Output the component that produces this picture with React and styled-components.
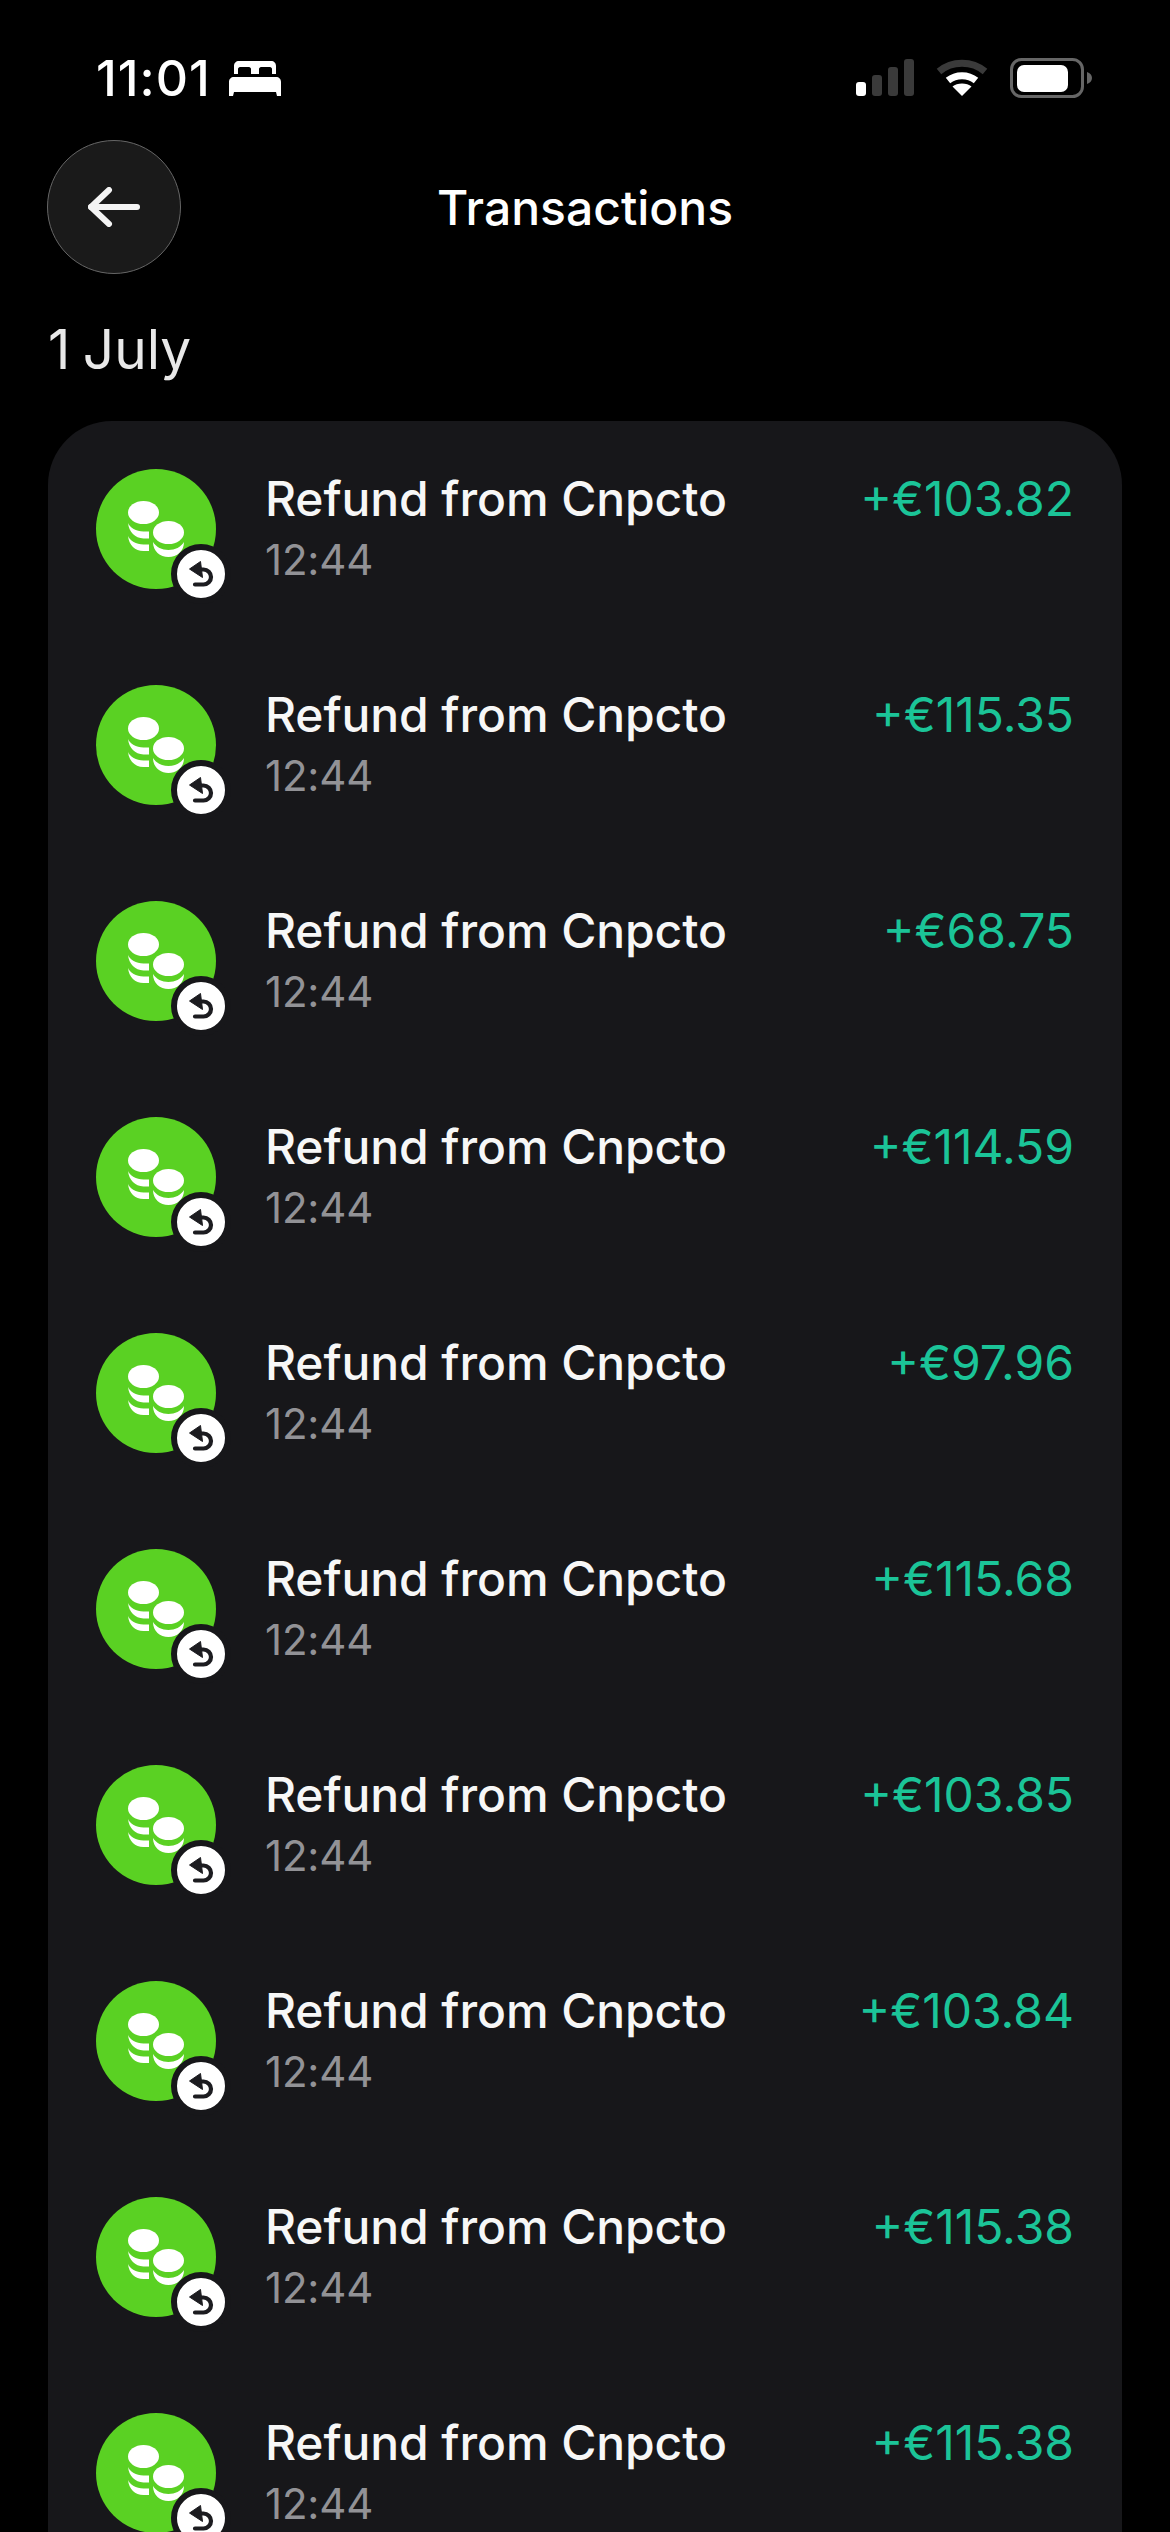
import styled, { createGlobalStyle } from 'styled-components';

const GlobalStyle = createGlobalStyle`
  html, body {
    margin: 0;
    padding: 0;
    background: #000;
  }
  * {
    box-sizing: border-box;
  }
`;

const Screen = styled.div`
  width: 1170px;
  height: 2532px;
  overflow: hidden;
  background: #000;
  color: #fff;
  font-family: Inter, "Noto Sans", sans-serif;
`;

const StatusBar = styled.div`
  height: 140px;
  padding: 0 78px 0 96px;
  display: flex;
  align-items: flex-start;
  justify-content: space-between;
`;

const StatusLeft = styled.div`
  display: flex;
  align-items: center;
  gap: 18px;
  height: 36px;
  margin-top: 60px;
`;

const Clock = styled.span`
  font-size: 50px;
  font-weight: 500;
  line-height: 36px;
  letter-spacing: 1px;
`;

const StatusRight = styled.div`
  display: flex;
  align-items: center;
  gap: 22px;
  margin-top: 58px;
`;

const NavBar = styled.div`
  position: relative;
  height: 134px;
  padding-left: 47px;
  display: flex;
  align-items: center;
`;

const BackButton = styled.div`
  width: 134px;
  height: 134px;
  border-radius: 50%;
  background: #1a1a1a;
  border: 1.5px solid #666;
  display: flex;
  align-items: center;
  justify-content: center;
`;

const NavTitle = styled.div`
  position: absolute;
  left: 0;
  right: 0;
  top: 0;
  bottom: 0;
  display: flex;
  align-items: center;
  justify-content: center;
  font-size: 48px;
  font-weight: 500;
`;

const DateLabel = styled.div`
  margin-top: 40px;
  padding-left: 48px;
  height: 70px;
  font-size: 55px;
  line-height: 70px;
  word-spacing: -3px;
  color: #e8e8e8;
`;

const Card = styled.div`
  margin: 37px 48px 0;
  padding: 48px 48px 0;
  background: #17171a;
  border-radius: 64px 64px 0 0;
  display: flex;
  flex-direction: column;
  gap: 96px;
`;

const Row = styled.div`
  display: flex;
  align-items: flex-start;
  height: 120px;
`;

const Avatar = styled.div`
  position: relative;
  flex: none;
  width: 120px;
  height: 120px;
  border-radius: 50%;
  background: #5ad123;
  display: flex;
  align-items: center;
  justify-content: center;
`;

const Badge = styled.div`
  position: absolute;
  left: 75px;
  top: 75px;
  width: 60px;
  height: 60px;
  border-radius: 50%;
  background: #fff;
  border: 6px solid #17171a;
  display: flex;
  align-items: center;
  justify-content: center;
`;

const Info = styled.div`
  flex: 1;
  margin-left: 49px;
  display: flex;
  flex-direction: column;
`;

const Title = styled.div`
  font-size: 48px;
  font-weight: 500;
  line-height: 60px;
  letter-spacing: -0.1px;
  color: #f7f7f7;
`;

const Time = styled.div`
  margin-top: 1px;
  font-size: 42px;
  line-height: 60px;
  letter-spacing: -0.2px;
  color: #929296;
`;

const Amount = styled.div`
  font-size: 48px;
  line-height: 60px;
  color: #1bc498;
`;

const amounts = [
  '+€103.82', '+€115.35', '+€68.75', '+€114.59', '+€97.96',
  '+€115.68', '+€103.85', '+€103.84', '+€115.38', '+€115.38',
];

const BedIcon = () => (
  <svg width="52" height="36" viewBox="0 0 52 36">
    <path fill="#fff" d="M5 14V6c0-3 2-5 5-5h32c3 0 5 2 5 5v8h-4V9c0-1-1-2-2-2h-9c-1 0-2 1-2 2v5h-8V9c0-1-1-2-2-2h-9c-1 0-2 1-2 2v5z" />
    <path fill="#fff" d="M5 17h42c3 0 5 2 5 5v14h-4l-1-4H5l-1 4H0V22c0-3 2-5 5-5z" />
  </svg>
);

const SignalIcon = () => (
  <svg width="58" height="38" viewBox="0 0 58 38">
    <rect x="0" y="23" width="10" height="14" rx="3" fill="#fff" />
    <rect x="16" y="16" width="10" height="21" rx="3" fill="#3a3a3a" />
    <rect x="32" y="8" width="10" height="29" rx="3" fill="#3a3a3a" />
    <rect x="48" y="0" width="10" height="37" rx="3" fill="#3a3a3a" />
  </svg>
);

const WifiIcon = () => (
  <svg width="52" height="38" viewBox="0 0 52 38">
    <path d="M3 12.500C16 1.500 36 1.500 49 12.500" fill="none" stroke="#3a3a3a" strokeWidth="7" />
    <path d="M12 21.500C20 15 32 15 40 21.500" fill="none" stroke="#fff" strokeWidth="7" />
    <path d="M26 37l-9.500-9.500C21 23.500 31 23.500 35.500 27.500z" fill="#fff" />
  </svg>
);

const BatteryIcon = () => (
  <svg width="82" height="40" viewBox="0 0 82 40">
    <rect x="1.500" y="1.500" width="71" height="37" rx="10" fill="none" stroke="#666" strokeWidth="3" />
    <rect x="7" y="7" width="51" height="27" rx="7" fill="#fff" />
    <path d="M77 14c3 1 5 3 5 6s-2 5-5 6z" fill="#666" />
  </svg>
);

const BackIcon = () => (
  <svg width="52" height="40" viewBox="0 0 52 40" fill="none" stroke="#f4f4f4" strokeWidth="6" strokeLinecap="round" strokeLinejoin="round">
    <path d="M3 20h46" />
    <path d="M21 3L3 20l18 17" />
  </svg>
);

const CoinsIcon = () => (
  <svg width="56" height="56" viewBox="0 0 56 56" fill="#fff">
    <ellipse cx="15.500" cy="11.500" rx="15.500" ry="11.500" />
    <path d="M0 22c2 5 8 8 15.500 8.500H21v7h-5.500C7 37 1 31 0 22z" />
    <path d="M0 35c2 5 8 8 15.500 8.500H21v6.500h-5.500C7 50 1 44 0 35z" />
    <ellipse cx="40.500" cy="31.500" rx="15.500" ry="11.500" />
    <path d="M25 41c3 5 9 8 15.500 8S53 46 56 41c0 9-7 15-15.500 15S25 50 25 41z" />
  </svg>
);

const RefundIcon = () => (
  <svg width="25" height="26" viewBox="0 0 25 26" fill="none">
    <path d="M9 8.500h5.500a7.500 7.500 0 0 1 0 15H6" stroke="#1c1c20" strokeWidth="4.200" strokeLinecap="round" />
    <path d="M11.500 0.500L13.500 16.500L0.500 8z" fill="#1c1c20" stroke="#1c1c20" strokeWidth="1" strokeLinejoin="round" />
  </svg>
);

const TransactionRow = ({ amount }) => (
  <Row>
    <Avatar>
      <CoinsIcon />
      <Badge>
        <RefundIcon />
      </Badge>
    </Avatar>
    <Info>
      <Title>Refund from Cnpcto</Title>
      <Time>12:44</Time>
    </Info>
    <Amount>{amount}</Amount>
  </Row>
);

const App = () => (
  <>
    <GlobalStyle />
    <Screen>
      <StatusBar>
        <StatusLeft>
          <Clock>11:01</Clock>
          <BedIcon />
        </StatusLeft>
        <StatusRight>
          <SignalIcon />
          <WifiIcon />
          <BatteryIcon />
        </StatusRight>
      </StatusBar>
      <NavBar>
        <BackButton>
          <BackIcon />
        </BackButton>
        <NavTitle>Transactions</NavTitle>
      </NavBar>
      <DateLabel>1 July</DateLabel>
      <Card>
        {amounts.map((amount, index) => (
          <TransactionRow key={index} amount={amount} />
        ))}
      </Card>
    </Screen>
  </>
);

export default App;
